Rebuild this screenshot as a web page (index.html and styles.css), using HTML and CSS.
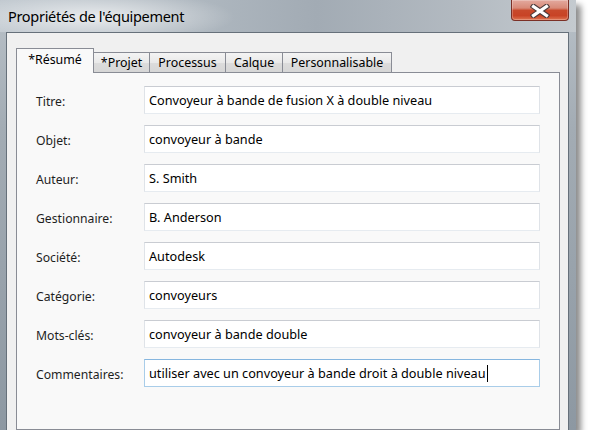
FILE: index.html
```html
<!DOCTYPE html>
<html lang="fr">
<head>
<meta charset="utf-8">
<title>Propriétés de l'équipement</title>
<link rel="stylesheet" href="styles.css">
</head>
<body>
<div class="window">
  <div class="titlebar">
    <span class="title">Propriétés de l'équipement</span>
    <div class="close">
      <svg width="20" height="14" viewBox="0 0 20 14">
        <path d="M3.5 2.5 L16.5 11.5 M16.5 2.5 L3.5 11.5" stroke="#4b3a3a" stroke-width="5.4" stroke-linecap="square" fill="none"/>
        <path d="M3.5 2.5 L16.5 11.5 M16.5 2.5 L3.5 11.5" stroke="#ffffff" stroke-width="3.2" stroke-linecap="square" fill="none"/>
      </svg>
    </div>
  </div>
  <div class="frame">
    <div class="client">
      <div class="tabs">
        <div class="tab active t1">*Résumé</div>
        <div class="tab t2">*Projet</div>
        <div class="tab t3">Processus</div>
        <div class="tab t4">Calque</div>
        <div class="tab t5">Personnalisable</div>
      </div>
      <div class="panel">
        <div class="form">
          <div class="label">Titre:</div>
          <div class="field">Convoyeur à bande de fusion X à double niveau</div>
          <div class="label">Objet:</div>
          <div class="field">convoyeur à bande</div>
          <div class="label">Auteur:</div>
          <div class="field">S. Smith</div>
          <div class="label">Gestionnaire:</div>
          <div class="field">B. Anderson</div>
          <div class="label">Société:</div>
          <div class="field">Autodesk</div>
          <div class="label">Catégorie:</div>
          <div class="field">convoyeurs</div>
          <div class="label">Mots-clés:</div>
          <div class="field">convoyeur à bande double</div>
          <div class="label">Commentaires:</div>
          <div class="field focused">utiliser avec un convoyeur à bande droit à double niveau<span class="caret"></span></div>
        </div>
      </div>
    </div>
  </div>
</div>
</body>
</html>
```

FILE: styles.css
```css
body {
  margin: 0;
  background: #ffffff;
  font-family: "Noto Sans", "Open Sans", sans-serif;
  color: #1e1e1e;
}

.window {
  width: 576px;
  height: 430px;
  display: flex;
  flex-direction: column;
  background: linear-gradient(#b9c1c8, #a3acb4 30%, #8d98a2);
  box-shadow: 5px 5px 6px rgba(0, 0, 0, 0.45);
  overflow: hidden;
}

.titlebar {
  height: 32px;
  flex: none;
  display: flex;
  align-items: flex-start;
  justify-content: space-between;
  padding-right: 7px;
  background:
    radial-gradient(ellipse 140px 26px at 95px 17px, rgba(255, 255, 255, 0.7), rgba(255, 255, 255, 0) 100%),
    linear-gradient(to right, #bfc7ce 0%, #aeb7bf 35%, #a2abb4 55%, #b3bac1 80%, #c4cacf 100%);
}

.title {
  margin-top: 6px;
  padding-left: 8px;
  font-size: 14.5px;
  letter-spacing: -0.3px;
  line-height: 20px;
  color: #000;
}

.close {
  width: 58px;
  height: 21px;
  box-sizing: border-box;
  border: 1px solid #7b3026;
  border-top: none;
  border-radius: 0 0 4px 4px;
  background: linear-gradient(#e3a99e 0%, #d88a78 40%, #c8492b 52%, #c84325 78%, #de7452 100%);
  box-shadow: inset 0 0 0 1px rgba(255, 255, 255, 0.25);
  display: flex;
  align-items: center;
  justify-content: center;
}

.close svg {
  display: block;
  margin-top: 1px;
}

.frame {
  flex: 1;
  min-height: 0;
  display: flex;
  padding: 0 7px 0 6px;
}

.client {
  flex: 1;
  min-width: 0;
  display: flex;
  flex-direction: column;
  background: #f0f0f0;
  border: 1px solid #66707a;
  border-bottom: none;
  padding: 15px 8px 0 9px;
}

.tabs {
  display: flex;
  align-items: flex-end;
  height: 25px;
  margin-bottom: -1px;
  position: relative;
  z-index: 1;
}

.tab {
  box-sizing: border-box;
  height: 21px;
  border: 1px solid #898c95;
  margin-left: -1px;
  background: linear-gradient(#f4f4f4, #e9e9e9 50%, #dcdcdc 52%, #d6d6d6);
  font-size: 12.4px;
  line-height: 19px;
  text-align: center;
  color: #000;
  white-space: nowrap;
}

.tab.active {
  height: 25px;
  margin-left: 0;
  border-bottom: none;
  background: #f9f9f9;
  line-height: 22px;
  position: relative;
  z-index: 2;
}

.t1 { width: 78px; }
.t2 { width: 57px; }
.t3 { width: 77px; }
.t4 { width: 58px; }
.t5 { width: 110px; }

.panel {
  flex: 1;
  border: 1px solid #898c95;
  background: #f9f9f9;
  padding: 13px 19px 0 19px;
}

.form {
  display: grid;
  grid-template-columns: 108px 396px;
  row-gap: 11px;
  align-items: center;
}

.label {
  font-size: 12.2px;
  padding-top: 3px;
  color: #1e1e1e;
}

.field {
  box-sizing: border-box;
  height: 28px;
  border: 1px solid #dfe3e8;
  border-top-color: #c9ccd2;
  border-bottom-color: #e6ebf0;
  background: #ffffff;
  padding: 0 4px;
  display: flex;
  align-items: center;
  font-size: 12.7px;
  color: #000;
  white-space: nowrap;
  overflow: hidden;
}

.field.focused {
  border-color: #a9cde9;
  border-top-color: #86b6df;
}

.caret {
  display: inline-block;
  width: 1px;
  height: 17px;
  background: #000;
  margin-left: 1px;
}
```
